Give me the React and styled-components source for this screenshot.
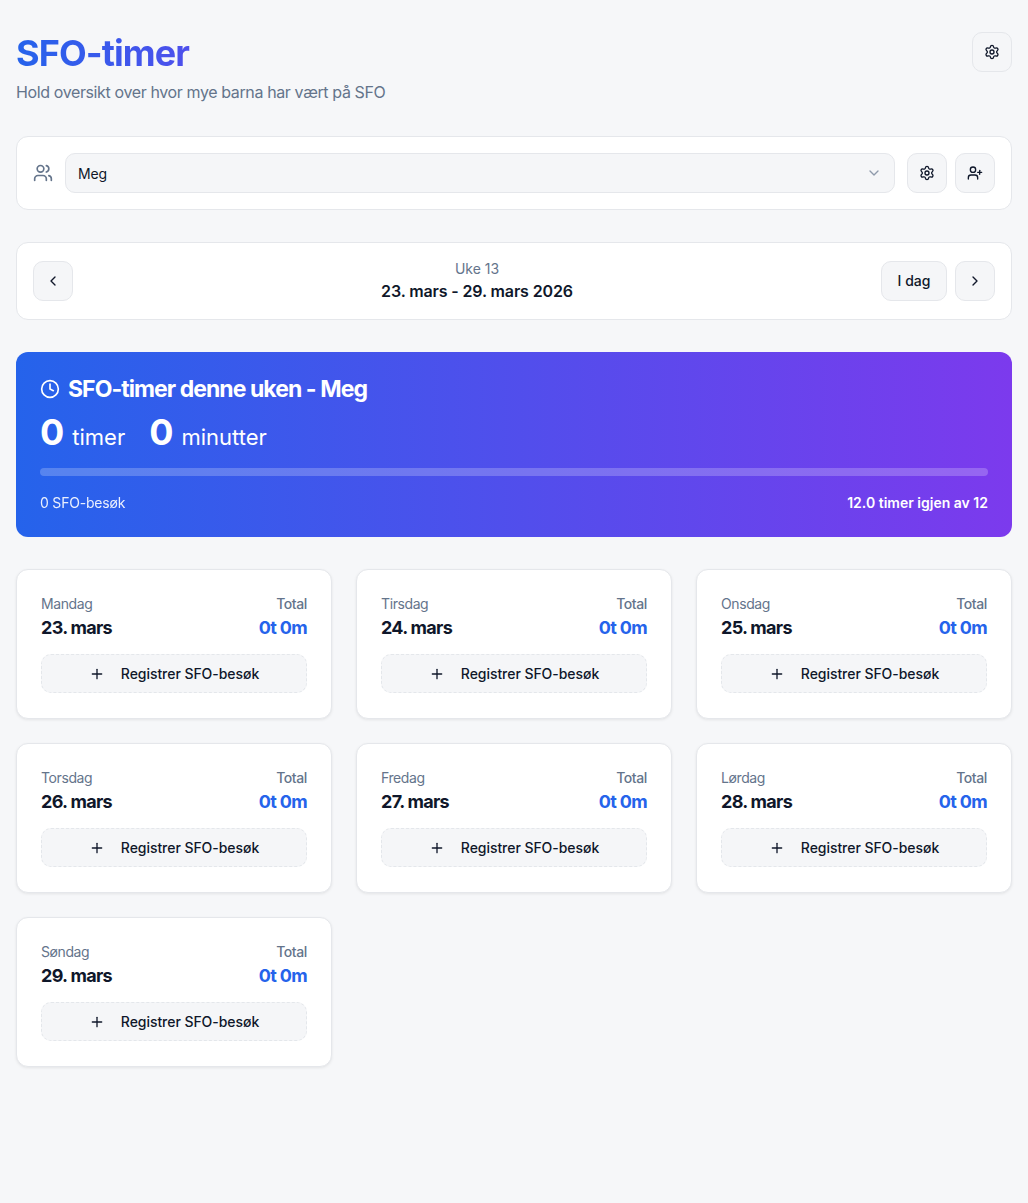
import React from "react";
import styled, { createGlobalStyle } from "styled-components";
import { Settings, Users, UserPlus, ChevronDown, ChevronLeft, ChevronRight, Clock, Plus } from "lucide-react";

const Global = createGlobalStyle`
  * { box-sizing: border-box; }
  html, body { margin: 0; padding: 0; background: #f6f7f9; }
  body { font-family: Inter, "Liberation Sans", sans-serif; color: #0f172a; -webkit-font-smoothing: antialiased; }
`;
const Page = styled.div`
  min-height: 1203px;
  padding: 32px 16px;
  display: flex;
  flex-direction: column;
  gap: 32px;
`;
const Header = styled.header`
  display: flex;
  justify-content: space-between;
  align-items: flex-start;
`;
const Title = styled.h1`
  margin: 0 0 6px;
  font-size: 36px;
  line-height: 42px;
  font-weight: 700;
  letter-spacing: -0.9px;
  background: linear-gradient(90deg, #2563eb, #7c3aed);
  -webkit-background-clip: text;
  background-clip: text;
  color: transparent;
`;
const Subtitle = styled.p`
  margin: 0;
  font-size: 16px;
  line-height: 24px;
  letter-spacing: -0.38px;
  color: #64748b;
`;
const IconButton = styled.button`
  width: 40px;
  height: 40px;
  flex: none;
  display: flex;
  align-items: center;
  justify-content: center;
  padding: 0;
  border: 1px solid #e5e7eb;
  border-radius: 10px;
  background: #f5f6f8;
  color: #0f172a;
`;
const TextButton = styled(IconButton)`
  width: 66px;
  font: 500 14px/20px Inter, sans-serif;
`;
const Panel = styled.section`
  display: flex;
  align-items: center;
  gap: 8px;
  padding: 16px;
  background: #fff;
  border: 1px solid #e5e7eb;
  border-radius: 12px;
`;
const PeopleIcon = styled(Users)`
  color: #64748b;
  margin-right: 4px;
  flex: none;
`;
const Select = styled.div`
  flex: 1;
  height: 40px;
  display: flex;
  align-items: center;
  justify-content: space-between;
  padding: 0 12px;
  background: #f5f6f8;
  border: 1px solid #e5e7eb;
  border-radius: 10px;
  font-size: 14px;
  letter-spacing: -0.1px;
  margin-right: 4px;
`;
const Chevron = styled(ChevronDown)`
  color: #64748b;
  opacity: 0.7;
`;
const WeekLabel = styled.div`
  flex: 1;
  text-align: center;
`;
const WeekNumber = styled.div`
  font-size: 14px;
  line-height: 20px;
  color: #64748b;
`;
const WeekRange = styled.div`
  font-size: 16px;
  line-height: 24px;
  font-weight: 600;
  letter-spacing: -0.13px;
`;
const Hero = styled.section`
  padding: 24px;
  height: 185px;
  border-radius: 12px;
  background: linear-gradient(90deg, #2563eb, #7c3aed);
  color: #fff;
`;
const HeroTitle = styled.h2`
  margin: 0;
  display: flex;
  align-items: center;
  gap: 8px;
  font-size: 23px;
  line-height: 26px;
  font-weight: 700;
  letter-spacing: -0.95px;
`;
const Totals = styled.div`
  display: flex;
  align-items: baseline;
  gap: 24px;
  margin-top: 10px;
  line-height: 40px;
`;
const TotalGroup = styled.span`
  display: flex;
  align-items: baseline;
  gap: 8px;
`;
const Big = styled.span`
  font-size: 36px;
  font-weight: 700;
`;
const Unit = styled.span`
  font-size: 22px;
`;
const Track = styled.div`
  height: 8px;
  margin-top: 11px;
  border-radius: 4px;
  background: rgba(255, 255, 255, 0.22);
`;
const HeroFooter = styled.div`
  display: flex;
  justify-content: space-between;
  margin-top: 17px;
  font-size: 14px;
  line-height: 20px;
`;
const Visits = styled.span`
  opacity: 0.9;
  letter-spacing: -0.2px;
`;
const Remaining = styled.span`
  font-weight: 600;
`;
const Grid = styled.div`
  display: grid;
  grid-template-columns: repeat(3, 1fr);
  gap: 24px;
`;
const DayCard = styled.article`
  height: 150px;
  padding: 24px;
  background: #fff;
  border: 1px solid #e5e7eb;
  border-radius: 12px;
  box-shadow: 0 1px 3px rgba(0, 0, 0, 0.08);
`;
const DayHead = styled.div`
  display: flex;
  justify-content: space-between;
  margin-bottom: 12px;
`;
const TotalColumn = styled.div`
  text-align: right;
`;
const Small = styled.div`
  font-size: 14px;
  line-height: 20px;
  font-weight: ${p => p.$strong ? 500 : 400};
  letter-spacing: -0.4px;
  color: #64748b;
`;
const DayValue = styled.div`
  font-size: 18px;
  line-height: 28px;
  font-weight: 700;
  letter-spacing: -0.7px;
  color: ${p => p.$accent ? "#2563eb" : "#0f172a"};
`;
const AddButton = styled.button`
  width: 100%;
  height: 39px;
  display: flex;
  align-items: center;
  justify-content: center;
  gap: 16px;
  padding: 0;
  border: 1px dashed #e4e7eb;
  border-radius: 10px;
  background: #f5f6f8;
  color: #0f172a;
  font: 500 14px/20px Inter, sans-serif;
  letter-spacing: -0.05px;
`;

const days = [
  ["Mandag", "23. mars"], ["Tirsdag", "24. mars"], ["Onsdag", "25. mars"], ["Torsdag", "26. mars"],
  ["Fredag", "27. mars"], ["Lørdag", "28. mars"], ["Søndag", "29. mars"],
];

export default function App() {
  return (
    <Page>
      <Global />
      <Header>
        <div>
          <Title>SFO-timer</Title>
          <Subtitle>Hold oversikt over hvor mye barna har vært på SFO</Subtitle>
        </div>
        <IconButton aria-label="Innstillinger"><Settings size={16} /></IconButton>
      </Header>
      <Panel>
        <PeopleIcon size={20} />
        <Select>Meg<Chevron size={16} /></Select>
        <IconButton aria-label="Innstillinger"><Settings size={16} /></IconButton>
        <IconButton aria-label="Legg til"><UserPlus size={16} /></IconButton>
      </Panel>
      <Panel>
        <IconButton aria-label="Forrige"><ChevronLeft size={16} /></IconButton>
        <WeekLabel>
          <WeekNumber>Uke 13</WeekNumber>
          <WeekRange>23. mars - 29. mars 2026</WeekRange>
        </WeekLabel>
        <TextButton>I dag</TextButton>
        <IconButton aria-label="Neste"><ChevronRight size={16} /></IconButton>
      </Panel>
      <Hero>
        <HeroTitle><Clock size={20} />SFO-timer denne uken - Meg</HeroTitle>
        <Totals>
          <TotalGroup><Big>0</Big><Unit>timer</Unit></TotalGroup>
          <TotalGroup><Big>0</Big><Unit>minutter</Unit></TotalGroup>
        </Totals>
        <Track />
        <HeroFooter>
          <Visits>0 SFO-besøk</Visits>
          <Remaining>12.0 timer igjen av 12</Remaining>
        </HeroFooter>
      </Hero>
      <Grid>
        {days.map(([d, date]) => (
          <DayCard key={d}>
            <DayHead>
              <div>
                <Small>{d}</Small>
                <DayValue>{date}</DayValue>
              </div>
              <TotalColumn>
                <Small $strong>Total</Small>
                <DayValue $accent>0t 0m</DayValue>
              </TotalColumn>
            </DayHead>
            <AddButton><Plus size={16} />Registrer SFO-besøk</AddButton>
          </DayCard>
        ))}
      </Grid>
    </Page>
  );
}
